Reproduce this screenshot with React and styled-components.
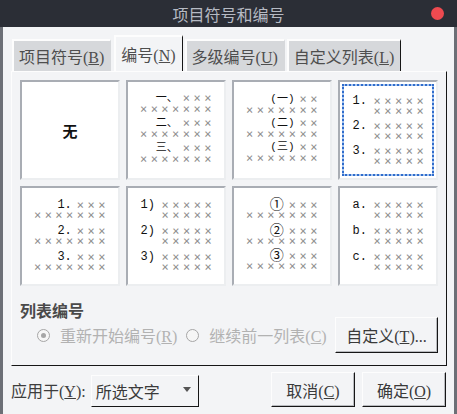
import React from 'react'
import styled, { createGlobalStyle } from 'styled-components'

const GlobalStyle = createGlobalStyle`
  html, body {
    margin: 0;
    padding: 0;
    background: #f3f4f6;
  }
  body {
    font-family: "Liberation Serif", "Noto Sans CJK SC", serif;
    color: #3d3d3d;
  }
`

const Window = styled.div`
  width: 457px;
  height: 414px;
  display: flex;
  flex-direction: column;
  overflow: hidden;
  background: #f3f4f6;
`

const TitleBar = styled.div`
  flex: none;
  height: 27px;
  background: #2b2e36;
  display: grid;
  grid-template-columns: 1fr auto 1fr;
  align-items: center;
`

const Title = styled.div`
  grid-column: 2;
  color: #b6bac3;
  font-size: 16px;
  font-family: "Noto Sans CJK SC", sans-serif;
`

const CloseDot = styled.span`
  grid-column: 3;
  justify-self: end;
  margin-right: 13px;
  width: 13px;
  height: 13px;
  border-radius: 50%;
  background: #ee4a50;
`

const Body = styled.div`
  flex: 1;
  display: flex;
  flex-direction: column;
  border-left: 3px solid #6c6f76;
  border-right: 3px solid #6c6f76;
  padding: 8px 7px 0 8px;
`

const Tabs = styled.div`
  display: flex;
  align-items: flex-end;
  gap: 2px;
  height: 36px;
  margin-left: 1px;
`

const Tab = styled.div`
  box-sizing: border-box;
  height: ${p => (p.$active ? 36 : 32)}px;
  padding: 0 6px 0 5px;
  display: flex;
  align-items: center;
  font-size: 16px;
  color: #4e4e4e;
  white-space: nowrap;
  background: ${p => (p.$active ? '#f3f4f6' : '#d6d8db')};
  border-top: 2px solid #fdfdfd;
  border-left: 2px solid #fdfdfd;
  border-right: 1px solid ${p => (p.$edge ? '#161616' : 'transparent')};
  margin-left: ${p => (p.$active ? 1 : 0)}px;
`

const Panel = styled.div`
  box-sizing: border-box;
  width: 436px;
  border-top: 1px solid #fdfdfd;
  border-left: 1px solid #fdfdfd;
  border-right: 1px solid #161616;
  border-bottom: 1px solid #161616;
  padding: 8px 8px 12px 8px;
`

const Grid = styled.div`
  display: grid;
  grid-template-columns: repeat(4, 100px);
  grid-auto-rows: 100px;
  gap: 6px;
`

const Cell = styled.div`
  position: relative;
  box-sizing: border-box;
  background: #fff;
  border-top: 2px solid #a9adb4;
  border-left: 2px solid #a9adb4;
  border-right: 2px solid #eceef0;
  border-bottom: 2px solid #eceef0;
  display: flex;
  flex-direction: column;
  align-items: center;
  justify-content: ${p => (p.$center ? 'center' : 'flex-start')};
  padding-top: ${p => p.$top || 0}px;
  gap: ${p => p.$gap || 0}px;

  ${p => p.$selected && `
    &::after {
      content: "";
      position: absolute;
      inset: 2px;
      border: 2px solid #a8c5ee;
      outline: 2px dotted #2f6ccc;
      outline-offset: -2px;
    }
  `}
`

const NoneMark = styled.span`
  font-family: "Noto Sans CJK SC", sans-serif;
  font-weight: 700;
  font-size: 15px;
  color: #111;
`

const Xs = styled.span`
  font-family: "DejaVu Sans Mono", monospace;
  font-size: 12px;
  line-height: 10px;
  color: #8e8e8e;
  letter-spacing: 3.5px;
  margin-right: -3.5px;
  white-space: nowrap;
`

const Mark = styled.span`
  font-family: "Liberation Mono", "Noto Sans CJK SC", monospace;
  font-size: ${p => p.$size || 12}px;
  line-height: 10px;
  color: #111;
  white-space: nowrap;
`

const RightGroup = styled.div`
  width: 71px;
  display: flex;
  flex-direction: column;
  align-items: flex-end;

  & > div {
    height: ${p => p.$lh}px;
    display: flex;
    align-items: center;
    gap: 5px;
  }
`

const HangGroup = styled.div`
  width: 71px;
  display: grid;
  grid-template-columns: 21px auto;
  grid-auto-rows: ${p => p.$lh}px;
  align-items: center;
`

const Section = styled.div`
  margin-top: 18px;
`

const SectionLabel = styled.div`
  font-size: 16px;
  line-height: 13px;
  font-weight: 700;
  color: #4a4a4a;
  font-family: "Noto Sans CJK SC", sans-serif;
`

const Row = styled.div`
  display: flex;
  align-items: center;
  height: 36px;
`

const RadioOption = styled.label`
  display: flex;
  align-items: center;
  gap: 10px;
  margin-left: ${p => (p.$first ? 17 : 9)}px;
  font-size: 16px;
  color: #b2b2b2;
  white-space: nowrap;
`

const RadioDot = styled.span`
  box-sizing: border-box;
  width: 13px;
  height: 13px;
  border-radius: 50%;
  border: 1px solid #a6a6a6;
  background: #f6f6f6;
  display: grid;
  place-items: center;

  &::before {
    content: "";
    width: 5px;
    height: 5px;
    border-radius: 50%;
    background: ${p => (p.$checked ? '#a6a6a6' : 'transparent')};
  }
`

const Button = styled.div`
  box-sizing: border-box;
  width: ${p => p.$w}px;
  height: ${p => p.$h}px;
  display: flex;
  align-items: center;
  justify-content: center;
  font-size: 16px;
  color: #3a3a3a;
  white-space: nowrap;
  background: #f3f4f6;
  border-top: 1px solid #fdfdfd;
  border-left: 1px solid #fdfdfd;
  border-right: 1px solid #161616;
  border-bottom: 1px solid #161616;
  box-shadow: inset -1px -1px 0 #b9bbbf;
`

const BottomBar = styled.div`
  flex: 1;
  display: flex;
  align-items: center;
  padding-right: 1px;
  gap: 7px;
  padding-bottom: 1px;
`

const ApplyLabel = styled.span`
  font-size: 16px;
  color: #3d3d3d;
  margin-right: -2px;
`

const Select = styled.div`
  box-sizing: border-box;
  width: 108px;
  height: 32px;
  padding: 0 7px 0 4px;
  margin-top: 2px;
  display: flex;
  align-items: center;
  justify-content: space-between;
  font-size: 16px;
  color: #3a3a3a;
  background: #f3f4f6;
  border-top: 1px solid #fdfdfd;
  border-left: 1px solid #fdfdfd;
  border-right: 1px solid #161616;
  border-bottom: 1px solid #161616;
`

const Caret = styled.span`
  width: 0;
  height: 0;
  border-left: 4px solid transparent;
  border-right: 4px solid transparent;
  border-top: 5px solid #555;
  margin-top: -3px;
`

const Spacer = styled.span`
  flex: 1;
`

const styles = [
  { kind: 'none' },
  { kind: 'right', marks: ['一、', '二、', '三、'], head: 3, top: 10, lh: 11, gap: 3, size: 11 },
  { kind: 'right', marks: ['(一)', '(二)', '(三)'], head: 2, top: 11, lh: 11, gap: 2, size: 11 },
  { kind: 'hang', marks: ['1.', '2.', '3.'], top: 14, lh: 10, gap: 5, selected: true },
  { kind: 'right', marks: ['1.', '2.', '3.'], head: 3, top: 12, lh: 10, gap: 6 },
  { kind: 'hang', marks: ['1)', '2)', '3)'], top: 12, lh: 10, gap: 6 },
  { kind: 'right', marks: ['①', '②', '③'], head: 3, top: 12, lh: 10, gap: 5.5, size: 14 },
  { kind: 'hang', marks: ['a.', 'b.', 'c.'], top: 12, lh: 10, gap: 6 },
]

const xs = n => '×'.repeat(n)

const StyleCell = ({ s }) => {
  if (s.kind === 'none') {
    return (
      <Cell $center>
        <NoneMark>无</NoneMark>
      </Cell>
    )
  }
  return (
    <Cell $top={s.top} $gap={s.gap} $selected={s.selected}>
      {s.marks.map(m =>
        s.kind === 'right' ? (
          <RightGroup key={m} $lh={s.lh}>
            <div>
              <Mark $size={s.size}>{m}</Mark>
              <Xs>{xs(s.head)}</Xs>
            </div>
            <div>
              <Xs>{xs(7)}</Xs>
            </div>
          </RightGroup>
        ) : (
          <HangGroup key={m} $lh={s.lh}>
            <Mark>{m}</Mark>
            <Xs>{xs(5)}</Xs>
            <span />
            <Xs>{xs(5)}</Xs>
          </HangGroup>
        )
      )}
    </Cell>
  )
}

const App = () => {
  return (
    <>
      <GlobalStyle />
      <Window>
        <TitleBar>
          <Title>项目符号和编号</Title>
          <CloseDot />
        </TitleBar>
        <Body>
          <Tabs>
            <Tab><span>项目符号(<u>B</u>)</span></Tab>
            <Tab $active $edge><span>编号(<u>N</u>)</span></Tab>
            <Tab><span>多级编号(<u>U</u>)</span></Tab>
            <Tab $edge><span>自定义列表(<u>L</u>)</span></Tab>
          </Tabs>
          <Panel>
            <Grid>
              {styles.map((s, i) => (
                <StyleCell key={i} s={s} />
              ))}
            </Grid>
            <Section>
              <SectionLabel>列表编号</SectionLabel>
              <Row>
                <RadioOption $first>
                  <RadioDot $checked />
                  <span>重新开始编号(<u>R</u>)</span>
                </RadioOption>
                <RadioOption>
                  <RadioDot />
                  <span>继续前一列表(<u>C</u>)</span>
                </RadioOption>
                <Spacer />
                <Button $w={103} $h={36}><span>自定义(<u>T</u>)...</span></Button>
              </Row>
            </Section>
          </Panel>
          <BottomBar>
            <ApplyLabel>应用于(<u>Y</u>):</ApplyLabel>
            <Select>
              <span>所选文字</span>
              <Caret />
            </Select>
            <Spacer />
            <Button $w={84} $h={35}><span>取消(<u>C</u>)</span></Button>
            <Button $w={84} $h={35}><span>确定(<u>O</u>)</span></Button>
          </BottomBar>
        </Body>
      </Window>
    </>
  )
}

export default App
